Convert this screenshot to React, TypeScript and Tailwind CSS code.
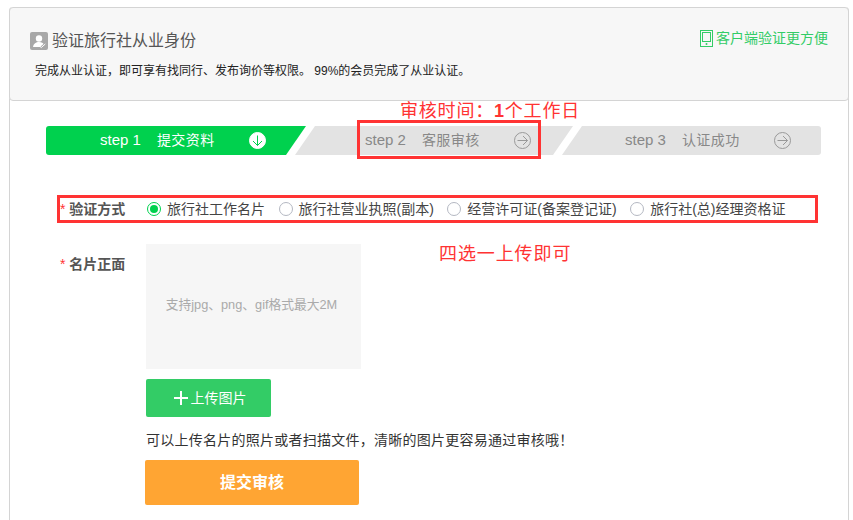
import React from "react";

const FONT = "font-['Liberation_Sans','Noto_Sans_CJK_SC',sans-serif]";

function CircleArrow({ down, color, bg }: { down?: boolean; color: string; bg?: string }) {
  return (
    <svg width="18" height="18" viewBox="0 0 18 18" className="shrink-0">
      <circle cx="8.500" cy="8.500" r="8" fill={bg ?? "none"} stroke={bg ?? color} strokeWidth="1" />
      {down ? (
        <path d="M8.500 3.500v10M4 9l4.500 4.500L13 9" fill="none" stroke={color} strokeWidth="1" />
      ) : (
        <path d="M3.500 8.500h10M9 4l4.500 4.500L9 13" fill="none" stroke={color} strokeWidth="1" />
      )}
    </svg>
  );
}

function Radio({ label, checked }: { label: string; checked?: boolean }) {
  return (
    <div className="flex items-center gap-[6px]">
      <span
        className={`w-[14px] h-[14px] rounded-full border flex items-center justify-center bg-white ${
          checked ? "border-[#00d14e]" : "border-[#b4b8c2]"
        }`}
      >
        {checked && <span className="w-[8px] h-[8px] rounded-full bg-[#00d14e]" />}
      </span>
      <span className="text-[14px] leading-[18px] text-[#444]">{label}</span>
    </div>
  );
}

export default function App() {
  return (
    <div className={`relative w-[853px] h-[520px] overflow-hidden bg-white ${FONT}`}>
      <div className="ml-[9px] mt-[7px] w-[840px] h-[513px] border-x border-[#d4d4d4] rounded-t-[4px]">
        {/* header */}
        <div className="h-[94px] -mx-px border border-[#d4d4d4] rounded-[4px] bg-[#f7f7f7] pl-[20px] pr-[20px] pt-[22px]">
          <div className="flex items-start justify-between">
            <div className="flex items-center gap-[4px]">
              <svg width="18" height="18" viewBox="0 0 18 18">
                <rect width="18" height="18" rx="2" fill="#a8a8a8" />
                <circle cx="9" cy="6.500" r="3.200" fill="#fff" />
                <path d="M3 15c.5-3.500 3-5 6-5s4 1 4.500 2L10 15z" fill="#fff" />
                <path d="M9.500 14l1.800 1.500 4-3.500" fill="none" stroke="#fff" strokeWidth="1" />
              </svg>
              <span className="text-[16px] leading-[22px] text-[#555]">验证旅行社从业身份</span>
            </div>
            <div className="flex items-center gap-[3px] mt-[-1px]">
              <svg width="13" height="17" viewBox="0 0 13 17">
                <rect x="0.500" y="0.500" width="12" height="16" fill="none" stroke="#33cc66" />
                <rect x="2.500" y="2.500" width="8" height="9" fill="none" stroke="#33cc66" />
                <circle cx="6.500" cy="14" r="1" fill="#33cc66" />
              </svg>
              <span className="text-[14px] leading-[18px] text-[#33cc66]">客户端验证更方便</span>
            </div>
          </div>
          <p className="mt-[10px] ml-[5px] text-[12px] leading-[18px] text-[#222]">
            完成从业认证，即可享有找同行、发布询价等权限。 99%的会员完成了从业认证。
          </p>
        </div>

        {/* steps */}
        <div className="mt-[25px] ml-[36px] flex h-[29px] w-[775px] text-[15px]">
          <div className="w-[260px] rounded-l-[3px] bg-[#00d14e] text-white [clip-path:polygon(0_0,100%_0,calc(100%-20px)_100%,0_100%)] flex items-center pl-[54px]">
            <span>step 1</span>
            <span className="ml-[16px] text-[14px] tracking-[0.5px]">提交资料</span>
            <span className="ml-[34px] flex"><CircleArrow down color="#00d14e" bg="#fff" /></span>
          </div>
          <div className="ml-[-11px] w-[278px] bg-[#e3e3e3] text-[#888] [clip-path:polygon(20px_0,100%_0,calc(100%-20px)_100%,0_100%)] flex items-center pl-[70px]">
            <span>step 2</span>
            <span className="ml-[16px] text-[14px] tracking-[0.5px]">客服审核</span>
            <span className="ml-[34px] flex"><CircleArrow color="#999" /></span>
          </div>
          <div className="ml-[-11px] w-[259px] rounded-r-[3px] bg-[#e3e3e3] text-[#888] [clip-path:polygon(20px_0,100%_0,100%_100%,0_100%)] flex items-center pl-[63px]">
            <span>step 3</span>
            <span className="ml-[16px] text-[14px] tracking-[0.5px]">认证成功</span>
            <span className="ml-[34px] flex"><CircleArrow color="#999" /></span>
          </div>
        </div>

        {/* method row */}
        <div className="mt-[40px] ml-[47px] w-[761px] h-[28px] border-[3px] border-[#ff3333] flex items-center box-border">
          <span className="w-[87px] text-[14px] font-bold text-[#555]">
            <span className="text-[#ff3333] font-normal">*</span> 验证方式
          </span>
          <div className="flex gap-[13.500px] whitespace-nowrap">
            <Radio label="旅行社工作名片" checked />
            <Radio label="旅行社营业执照(副本)" />
            <Radio label="经营许可证(备案登记证)" />
            <Radio label="旅行社(总)经理资格证" />
          </div>
        </div>

        {/* upload */}
        <div className="mt-[21px] flex">
          <div className="w-[136px] pl-[50px] pt-[11px] text-[14px] leading-[18px] font-bold text-[#555]">
            <span className="text-[#ff3333] font-normal">*</span> 名片正面
          </div>
          <div>
            <div className="w-[215px] h-[125px] pr-[4px] pb-[4px] bg-[#f6f6f6] flex items-center justify-center text-[12.750px] text-[#aaa] whitespace-nowrap">
              支持jpg、png、gif格式最大2M
            </div>
            <button className="mt-[10px] w-[125px] h-[38px] pl-[3px] rounded-[2px] bg-[#33cc66] text-white text-[14px] flex items-center justify-center gap-[3px]">
              <svg width="14" height="14" viewBox="0 0 14 14">
                <path d="M7 0v14M0 7h14" stroke="#fff" strokeWidth="2" />
              </svg>
              上传图片
            </button>
            <p className="mt-[14px] whitespace-nowrap text-[14px] leading-[18px] tracking-[0.25px] text-[#333]">
              可以上传名片的照片或者扫描文件，清晰的图片更容易通过审核哦！
            </p>
            <button className="mt-[11px] -ml-px block w-[214px] h-[45px] rounded-[2px] bg-[#ffa533] text-white text-[16px] font-bold">
              提交审核
            </button>
          </div>
        </div>
      </div>

      {/* annotations */}
      <div className="absolute left-[357px] top-[120px] w-[184px] h-[39px] border-[3px] border-[#ff3333]" />
      <div className="absolute left-[400px] top-[100px] text-[18px] leading-[22px] tracking-[0.8px] text-[#ff3333]">
        审核时间：<span className="font-bold">1</span>个工作日
      </div>
      <div className="absolute left-[439px] top-[243px] text-[18px] leading-[22px] tracking-[0.9px] text-[#ff3333]">
        四选一上传即可
      </div>
    </div>
  );
}
